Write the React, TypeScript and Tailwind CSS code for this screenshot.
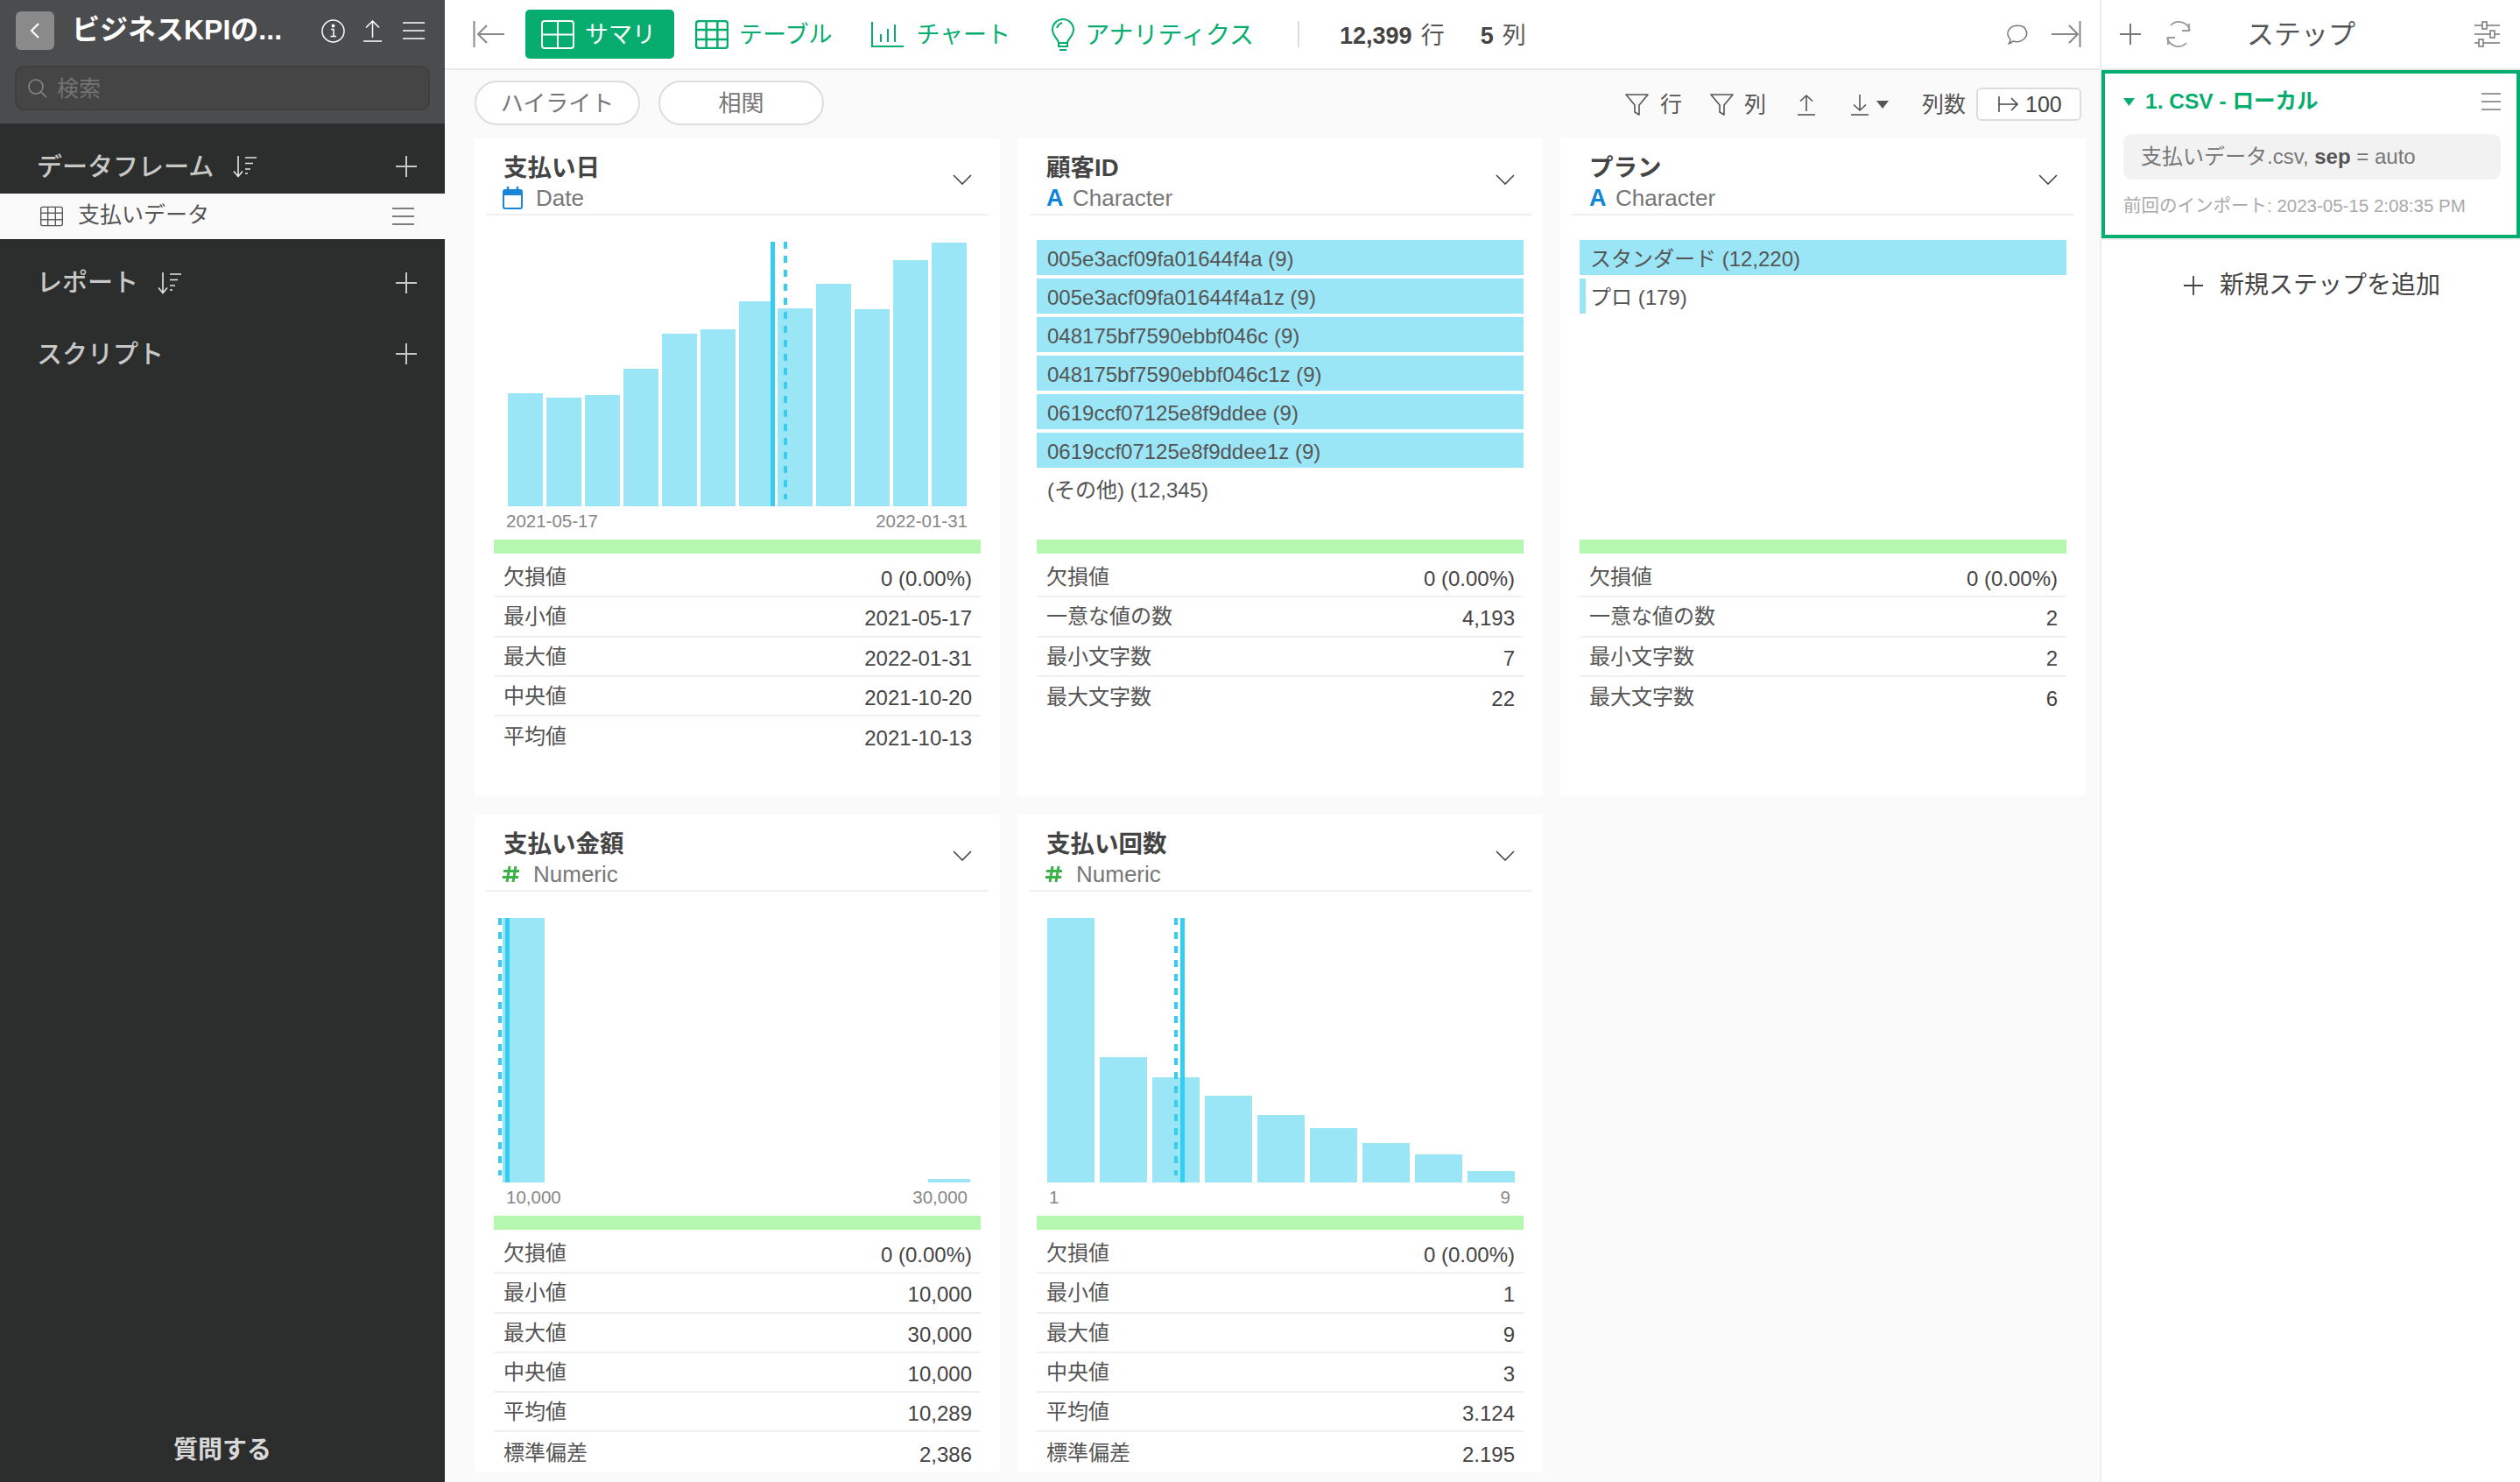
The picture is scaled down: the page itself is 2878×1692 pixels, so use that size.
import React from "react";

const GREEN = "#07ad6e";

type Stat = [string, string];
type Col = {
  title: string;
  type: "date" | "char" | "num";
  bars?: { x: number; w: number; h: number }[];
  solid?: number;
  dashed?: number;
  axis?: [string, string];
  items?: { label: string; w: number }[];
  stats: Stat[];
};

function evenBars(start: number, width: number, pitch: number, heights: number[]) {
  return heights.map((h, i) => ({ x: start + i * pitch, w: width, h }));
}

const columns: Col[] = [
  {
    title: "支払い日",
    type: "date",
    bars: evenBars(38, 40, 44, [129, 124, 127, 157, 197, 202, 234, 226, 254, 225, 281, 301]),
    solid: 338,
    dashed: 355,
    axis: ["2021-05-17", "2022-01-31"],
    stats: [
      ["欠損値", "0 (0.00%)"],
      ["最小値", "2021-05-17"],
      ["最大値", "2022-01-31"],
      ["中央値", "2021-10-20"],
      ["平均値", "2021-10-13"],
    ],
  },
  {
    title: "顧客ID",
    type: "char",
    items: [
      { label: "005e3acf09fa01644f4a (9)", w: 556 },
      { label: "005e3acf09fa01644f4a1z (9)", w: 556 },
      { label: "048175bf7590ebbf046c (9)", w: 556 },
      { label: "048175bf7590ebbf046c1z (9)", w: 556 },
      { label: "0619ccf07125e8f9ddee (9)", w: 556 },
      { label: "0619ccf07125e8f9ddee1z (9)", w: 556 },
      { label: "(その他) (12,345)", w: 0 },
    ],
    stats: [
      ["欠損値", "0 (0.00%)"],
      ["一意な値の数", "4,193"],
      ["最小文字数", "7"],
      ["最大文字数", "22"],
    ],
  },
  {
    title: "プラン",
    type: "char",
    items: [
      { label: "スタンダード (12,220)", w: 556 },
      { label: "プロ (179)", w: 7 },
    ],
    stats: [
      ["欠損値", "0 (0.00%)"],
      ["一意な値の数", "2"],
      ["最小文字数", "2"],
      ["最大文字数", "6"],
    ],
  },
  {
    title: "支払い金額",
    type: "num",
    bars: [
      { x: 32, w: 48, h: 302 },
      { x: 518, w: 48, h: 4 },
    ],
    solid: 35,
    dashed: 29,
    axis: ["10,000", "30,000"],
    stats: [
      ["欠損値", "0 (0.00%)"],
      ["最小値", "10,000"],
      ["最大値", "30,000"],
      ["中央値", "10,000"],
      ["平均値", "10,289"],
      ["標準偏差", "2,386"],
    ],
  },
  {
    title: "支払い回数",
    type: "num",
    bars: evenBars(34, 54, 60, [302, 143, 120, 99, 77, 62, 45, 32, 13]),
    solid: 186,
    dashed: 181,
    axis: ["1", "9"],
    stats: [
      ["欠損値", "0 (0.00%)"],
      ["最小値", "1"],
      ["最大値", "9"],
      ["中央値", "3"],
      ["平均値", "3.124"],
      ["標準偏差", "2.195"],
    ],
  },
];

function Menu({ color, w = 25 }: { color: string; w?: number }) {
  return (
    <svg width={w} height="20" viewBox="0 0 25 20" fill="none" stroke={color} strokeWidth="1.6" preserveAspectRatio="none">
      <path d="M0 1h25M0 10h25M0 19h25" />
    </svg>
  );
}

function Plus({ color = "#c8c8c8", size = 24 }: { color?: string; size?: number }) {
  return (
    <svg width={size} height={size} viewBox="0 0 24 24" fill="none" stroke={color} strokeWidth="2">
      <path d="M12 0v24M0 12h24" />
    </svg>
  );
}

function SortIcon() {
  return (
    <svg width="28" height="26" viewBox="0 0 28 26" fill="none" stroke="#e4e4e4" strokeWidth="1.6">
      <path d="M6 1v23M1 18.500l5 6 5-6" />
      <path d="M14 3h13M14 9.500h9M14 16h6M14 21h3" />
    </svg>
  );
}

function TableIcon({ color, w = 38, h = 33, cols = 3, rows = 3, sw = 2 }: { color: string; w?: number; h?: number; cols?: number; rows?: number; sw?: number }) {
  const v = Array.from({ length: cols - 1 }, (_, i) => ((i + 1) * 38) / cols);
  const r = Array.from({ length: rows - 1 }, (_, i) => ((i + 1) * 33) / rows);
  return (
    <svg width={w} height={h} viewBox="0 0 38 33" fill="none" stroke={color} strokeWidth={sw}>
      <rect x="1" y="1" width="36" height="31" rx="3" />
      {v.map((x) => (
        <path key={x} d={`M${x} 1v31`} />
      ))}
      {r.map((y) => (
        <path key={y} d={`M1 ${y}h36`} />
      ))}
    </svg>
  );
}

function Funnel() {
  return (
    <svg width="27" height="27" viewBox="0 0 27 27" fill="none" stroke="#555" strokeWidth="1.6" strokeLinejoin="round">
      <path d="M1 2h25L16 14v11l-5-3v-8z" />
    </svg>
  );
}

function ArrowBar({ down = false }: { down?: boolean }) {
  return (
    <svg width="20" height="25" viewBox="0 0 20 25" fill="none" stroke="#555" strokeWidth="1.6">
      {down ? <path d="M10 1v18M3 12.500l7 6.500 7-6.500" /> : <path d="M10 2v18M3 8.500l7-6.500 7 6.500" />}
      <path d="M0 24h20" />
    </svg>
  );
}

function TypeIcon({ type }: { type: Col["type"] }) {
  if (type === "date")
    return (
      <svg className="mr-[15px] -ml-[1px]" width="23" height="26" viewBox="0 0 23 26" fill="none" stroke="#1a86d8" strokeWidth="2">
        <rect x="1" y="4" width="21" height="21" rx="2" />
        <path d="M1 7.500h21" strokeWidth="5" />
        <path d="M6 0v5M17 0v5" strokeWidth="2.500" />
      </svg>
    );
  if (type === "char")
    return <span className="mr-[11px] w-[19px] text-[27px] leading-[26px] font-bold text-[#0d85d8]">A</span>;
  return (
    <svg className="mr-[15px] -ml-[1px]" width="20" height="20" viewBox="0 0 20 20" fill="none" stroke="#3fb14b" strokeWidth="3">
      <path d="M8 1L5 19M15 1l-3 18M1 6.500h18M0 13.500h18" />
    </svg>
  );
}

function Histogram({ col }: { col: Col }) {
  return (
    <svg width="600" height="302" viewBox="0 0 600 302" className="block">
      {col.bars!.map((b) => (
        <rect key={b.x} x={b.x} y={302 - b.h} width={b.w} height={b.h} fill="#9ae5f6" />
      ))}
      <rect x={col.solid} y="0" width="5" height="302" fill="#35cdf0" />
      <line x1={col.dashed} x2={col.dashed} y1="0" y2="294" stroke="#35cdf0" strokeWidth="4" strokeDasharray="8 8" />
    </svg>
  );
}

function SummaryCard({ col }: { col: Col }) {
  return (
    <div className="h-[751px] overflow-hidden bg-white">
      <div className="mx-[13px] flex h-[88px] items-start justify-between border-b-2 border-[#f0f0f0] pl-[20px] pr-[19px]">
        <div className="flex flex-col pt-[20px]">
          <div className="h-[28px] text-[27.500px] leading-[28px] font-bold text-[#444]">{col.title}</div>
          <div className="mt-[7px] flex h-[26px] items-center text-[26px] leading-[26px] text-[#777]">
            <TypeIcon type={col.type} />
            <span>{col.type === "date" ? "Date" : col.type === "char" ? "Character" : "Numeric"}</span>
          </div>
        </div>
        <svg className="mt-[41px]" width="22" height="12" viewBox="0 0 22 12" fill="none" stroke="#444" strokeWidth="1.600">
          <path d="M1 1l10 10L21 1" />
        </svg>
      </div>

      {col.bars ? (
        <div className="h-[370px] pt-[30px]">
          <Histogram col={col} />
          <div className="flex h-[34px] items-center justify-between pl-[36px] pr-[37px] text-[20.500px] text-[#888]">
            <span>{col.axis![0]}</span>
            <span>{col.axis![1]}</span>
          </div>
        </div>
      ) : (
        <div className="flex h-[370px] flex-col gap-[4px] px-[22px] pt-[28px]">
          {col.items!.map((it) => (
            <div key={it.label} className="relative flex h-[40px] items-center pl-[12px] pt-[4px] text-[24px] leading-none text-[#555]">
              <div className="absolute inset-y-0 left-0 bg-[#9ae5f6]" style={{ width: it.w }} />
              <span className="relative">{it.label}</span>
            </div>
          ))}
        </div>
      )}

      <div className="mx-[22px] h-[16px] bg-[#b5f7ae]" />
      <div className="mx-[22px] mt-[5px]">
        {col.stats.map(([k, v], i) => (
          <div
            key={k}
            className={`flex h-[45.300px] items-center justify-between pl-[11px] pr-[10px] text-[24px] leading-none ${
              i < col.stats.length - 1 ? "border-b-2 border-[#f0f0f0]" : ""
            }`}
          >
            <span className="pt-[1px] text-[#555]">{k}</span>
            <span className="pt-[5px] text-[#444]">{v}</span>
          </div>
        ))}
      </div>
    </div>
  );
}

function Sidebar() {
  return (
    <aside className="flex h-full w-[508px] shrink-0 flex-col bg-[#2c2e2d]">
      <div className="h-[141px] bg-[#4b4c4e] px-[18px] pt-[13px]">
        <div className="flex h-[44px] items-center">
          <div className="flex h-[44px] w-[44px] items-center justify-center rounded-[6px] bg-[#8a8a8a]">
            <svg width="12" height="18" viewBox="0 0 12 18" fill="none" stroke="#fff" strokeWidth="2.200">
              <path d="M10 1L2 9l8 8" />
            </svg>
          </div>
          <div className="-mt-[2px] ml-[20px] w-[285px] text-[32px] leading-none font-bold whitespace-nowrap text-white">ビジネスKPIの...</div>
          <svg width="27" height="27" viewBox="0 0 27 27" fill="none" stroke="#fff" strokeWidth="1.500">
            <circle cx="13.500" cy="13.500" r="12.500" />
            <path d="M11 11.500h3v8M10.500 19.500h6.500" />
            <circle cx="13.500" cy="7.500" r="1.200" fill="#fff" />
          </svg>
          <svg className="ml-[21px]" width="21" height="25" viewBox="0 0 21 25" fill="none" stroke="#fff" strokeWidth="1.500">
            <path d="M10.500 1v19M3 8.500L10.500 1 18 8.500M0 24h21" />
          </svg>
          <div className="ml-[24px] flex">
            <Menu color="#fff" />
          </div>
        </div>
        <div className="-mx-[1px] mt-[18px] flex h-[51px] items-center rounded-[10px] border-2 border-[#3e3e3e] bg-[#454545] pl-[13px]">
          <svg width="22" height="22" viewBox="0 0 22 22" fill="none" stroke="#8a8a8a" strokeWidth="1.500">
            <circle cx="9" cy="9" r="8" />
            <path d="M15 15l6 6" />
          </svg>
          <span className="ml-[11px] pt-[1px] text-[25px] leading-none text-[#737373]">検索</span>
        </div>
      </div>

      <div className="flex h-[80px] items-center pl-[42px] pr-[32px] pt-[18px] text-[29px] leading-none font-medium text-[#c8c8c8]">
        <span className="pt-[3px]">データフレーム</span>
        <span className="ml-[22px] flex">
          <SortIcon />
        </span>
        <span className="ml-auto flex">
          <Plus />
        </span>
      </div>
      <div className="flex h-[52px] items-center bg-[#fafafa] pl-[46px] pr-[35px] text-[25px] leading-none text-[#555]">
        <TableIcon color="#555" w={26} h={24} cols={3} rows={3} />
        <span className="-mt-[3px] ml-[17px]">支払いデータ</span>
        <span className="ml-auto flex">
          <Menu color="#555" />
        </span>
      </div>
      <div className="pt-[9px]">
        <div className="flex h-[81px] items-center pl-[42px] pr-[32px] text-[29px] leading-none font-medium text-[#c8c8c8]">
          <span className="pt-[2px]">レポート</span>
          <span className="ml-[22px] flex">
            <SortIcon />
          </span>
          <span className="ml-auto flex">
            <Plus />
          </span>
        </div>
        <div className="flex h-[81px] items-center pl-[42px] pr-[32px] text-[29px] leading-none font-medium text-[#c8c8c8]">
          <span className="pt-[3px]">スクリプト</span>
          <span className="ml-auto flex">
            <Plus />
          </span>
        </div>
      </div>
      <div className="mt-auto flex h-[76px] items-center justify-center pt-[3px] text-[28px] leading-none font-bold text-[#d8d8d8]">質問する</div>
    </aside>
  );
}

function TopBar() {
  return (
    <div className="flex h-[80px] shrink-0 items-center border-b-2 border-[#e8e8e8] bg-white pl-[32px] pr-[21px] text-[27px] leading-none">
      <svg width="36" height="30" viewBox="0 0 36 30" fill="none" stroke="#888" strokeWidth="2">
        <path d="M1.500 0v30M36 15H6M16 5L6 15l10 10" />
      </svg>
      <div className="ml-[24px] flex h-[56px] w-[170px] items-center rounded-[5px] bg-[#07ad6e] pl-[18px] text-white">
        <TableIcon color="#fff" cols={2} rows={2} />
        <span className="ml-[12px] pt-[3px]">サマリ</span>
      </div>
      <div className="ml-[24px] flex items-center" style={{ color: GREEN }}>
        <TableIcon color={GREEN} cols={3} rows={3} sw={2.5} />
        <span className="ml-[12px] pt-[3px]">テーブル</span>
      </div>
      <div className="ml-[45px] flex items-center" style={{ color: GREEN }}>
        <svg width="37" height="29" viewBox="0 0 37 29" fill="none" stroke={GREEN} strokeWidth="2">
          <path d="M1 0v28h36M11 14v9M19 8v15M27 3v20" />
        </svg>
        <span className="ml-[14px] pt-[3px]">チャート</span>
      </div>
      <div className="ml-[47px] flex items-center" style={{ color: GREEN }}>
        <svg width="26" height="37" viewBox="0 0 26 37" fill="none" stroke={GREEN} strokeWidth="2">
          <path d="M8 28c0-4-7-8-7-15a12 12 0 0 1 24 0c0 7-7 11-7 15z" />
          <path d="M8 32h10M9 36h8M8 28v5M18 28v5" />
          <path d="M6 11c1-3 3-5 6-6" />
        </svg>
        <span className="ml-[12px] pt-[3px] text-[28px]">アナリティクス</span>
      </div>
      <div className="ml-[50px] h-[30px] w-[2px] bg-[#dddddd]" />
      <div className="ml-[46px] pt-[5px] text-[#444]">
        <span className="font-bold">12,399</span>
        <span className="ml-[10px] text-[#555]">行</span>
      </div>
      <div className="ml-[41px] pt-[5px] text-[#444]">
        <span className="font-bold">5</span>
        <span className="ml-[10px] text-[#555]">列</span>
      </div>
      <svg className="ml-auto" width="26" height="23" viewBox="0 0 26 23" fill="none" stroke="#777" strokeWidth="1.500" strokeLinejoin="round">
        <path d="M5 17C1 13 1 8 4 5 8 0 19 0 22 5c3 4 2 9-2 12-4 3-9 3-12 2-1 1-4 3-5 3 1-1 2.500-3 2-5z" />
      </svg>
      <svg className="ml-[26px]" width="34" height="30" viewBox="0 0 34 30" fill="none" stroke="#888" strokeWidth="2">
        <path d="M32.500 0v30M0 15h30M20 5l10 10-10 10" />
      </svg>
    </div>
  );
}

function Toolbar() {
  return (
    <div className="flex h-[78px] shrink-0 items-center pl-[34px] pr-[21px] text-[25px] leading-none text-[#555]">
      <div className="-mt-[3px] flex h-[51px] w-[189px] items-center justify-center rounded-full border-2 border-[#dddddd] bg-white pt-[1px] text-[26px] text-[#777]">ハイライト</div>
      <div className="-mt-[3px] ml-[21px] flex h-[51px] w-[189px] items-center justify-center rounded-full border-2 border-[#dddddd] bg-white pt-[1px] text-[26px] text-[#777]">相関</div>
      <div className="ml-auto flex items-center">
        <Funnel />
        <span className="ml-[13px]">行</span>
        <span className="ml-[32px] flex">
          <Funnel />
        </span>
        <span className="ml-[12px]">列</span>
        <span className="ml-[36px] flex">
          <ArrowBar />
        </span>
        <span className="ml-[41px] flex">
          <ArrowBar down />
        </span>
        <svg className="ml-[9px]" width="14" height="9" viewBox="0 0 14 9" fill="#555">
          <path d="M0 0h14L7 9z" />
        </svg>
        <span className="ml-[38px]">列数</span>
        <div className="ml-[12px] flex h-[38px] w-[120px] items-center rounded-[6px] border-2 border-[#dddddd] bg-white pl-[23px] text-[#444]">
          <svg width="24" height="20" viewBox="0 0 24 20" fill="none" stroke="#444" strokeWidth="1.500">
            <path d="M1 1v18M1 10h21M15 3l7 7-7 7" />
          </svg>
          <span className="ml-[7px]">100</span>
        </div>
      </div>
    </div>
  );
}

function StepsPanel() {
  return (
    <aside className="flex h-full w-[480px] shrink-0 flex-col border-l-2 border-[#eeeeee] bg-white">
      <div className="flex h-[80px] shrink-0 items-center border-b-2 border-[#e8e8e8] pl-[21px] pr-[23px]">
        <Plus color="#777" />
        <svg className="ml-[28px]" width="30" height="30" viewBox="0 0 30 30" fill="none" stroke="#999" strokeWidth="1.800">
          <path d="M27 3v8h-8M28 11A13 13 0 0 0 6 5M3 27v-8h8M2 19a13 13 0 0 0 22 6" />
        </svg>
        <span className="ml-[63px] pt-[1px] text-[31px] leading-none text-[#555]">ステップ</span>
        <svg className="ml-auto" width="29" height="30" viewBox="0 0 29 30" fill="#fff" stroke="#777" strokeWidth="1.500">
          <path d="M0 5h29M0 15h29M0 25h29" />
          <rect x="9" y="1" width="5" height="8" />
          <rect x="18" y="11" width="5" height="8" />
          <rect x="5" y="21" width="5" height="8" />
        </svg>
      </div>
      <div className="flex h-[192px] shrink-0 flex-col border-4 border-[#07ad6e] pl-[21px] pr-[18px] pt-[19px]">
        <div className="flex h-[26px] items-center">
          <svg width="13" height="9" viewBox="0 0 13 9" fill={GREEN}>
            <path d="M0 0h13L6.500 9z" />
          </svg>
          <span className="ml-[12px] text-[24.500px] leading-none font-bold text-[#07ad6e]">1. CSV - ローカル</span>
          <span className="ml-auto flex">
            <Menu color="#777" w={22} />
          </span>
        </div>
        <div className="mt-[24px] flex h-[52px] items-center rounded-[10px] bg-[#f2f2f2] pl-[20px] text-[24px] leading-none text-[#777]">
          <span>
            支払いデータ.csv, <b className="text-[#555]">sep</b> = auto
          </span>
        </div>
        <div className="mt-[20px] text-[20.500px] leading-none text-[#aaaaaa]">前回のインポート: 2023-05-15 2:08:35 PM</div>
      </div>
      <div className="flex h-[106px] items-center border-t-2 border-[#eeeeee] pl-[94px] text-[28px] leading-none text-[#444]">
        <Plus color="#444" size={22} />
        <span className="ml-[19px]">新規ステップを追加</span>
      </div>
    </aside>
  );
}

export default function App() {
  return (
    <div className="flex h-[1692px] w-[2878px] overflow-hidden bg-[#fafafa] font-['Liberation_Sans','Noto_Sans_CJK_JP',sans-serif]">
      <Sidebar />
      <main className="flex min-w-0 flex-1 flex-col">
        <TopBar />
        <Toolbar />
        <div className="grid grid-cols-[600px_600px_600px] gap-x-[20px] gap-y-[21px] pl-[34px]">
          {columns.map((c) => (
            <SummaryCard key={c.title} col={c} />
          ))}
        </div>
      </main>
      <StepsPanel />
    </div>
  );
}
